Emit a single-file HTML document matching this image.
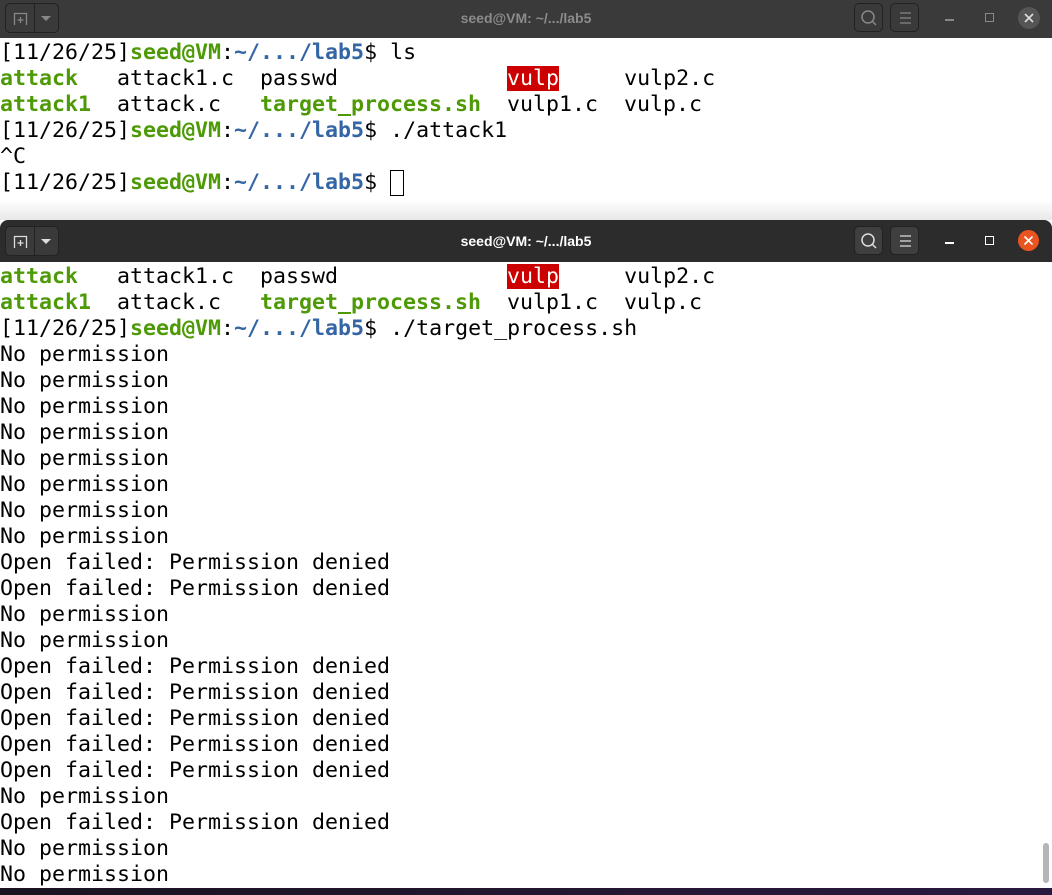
<!DOCTYPE html>
<html><head><meta charset="utf-8"><style>
*{margin:0;padding:0;box-sizing:border-box}
body{width:1052px;height:895px;overflow:hidden;background:#fff;position:relative;font-family:"DejaVu Sans Mono","Liberation Mono",monospace}
.tb{position:absolute;left:0;width:1052px;height:38px}
.t1{top:0;background:#3a3a3a;height:38px}
.t2{top:220px;background:#2c2c2c;height:42px;border-radius:8px 8px 0 0}
.title{position:absolute;left:0;right:0;text-align:center;font-family:"Liberation Sans",sans-serif;font-weight:bold;font-size:14px}
.grp{position:absolute;left:5px;width:54px;height:30px;border-radius:5px;border:1px solid #222}
.grp .d{position:absolute;left:28px;top:0;bottom:0;width:1px;background:#222}
.btn{position:absolute;width:29px;height:29px;border-radius:5px;border:1px solid #222}
.term{position:absolute;left:0;font-size:21.6px;line-height:26px;white-space:pre;color:#000}
.g{color:#4e9a06;font-weight:bold}.b{color:#3465a4;font-weight:bold}
.r{background:#cc0000;color:#fff}
</style></head><body>
<div class="tb t1">
 <div class="grp" style="top:3px;background:#3a3a3a"><div class="d"></div>
  <svg style="position:absolute;left:7px;top:7px" width="16" height="16"><path d="M1.5 14V2.5h12V14" stroke="#888" fill="none" stroke-width="1.3"/><path d="M7.5 6v6M4.5 9h6" stroke="#888" stroke-width="1.3"/></svg>
  <svg style="position:absolute;left:35px;top:12px" width="12" height="8"><path d="M0 0h10L5 5z" fill="#888"/></svg>
 </div>
 <div class="title" style="top:10px;color:#8b8b8b">seed@VM: ~/.../lab5</div>
 <div class="btn" style="left:854px;top:3px"><svg width="29" height="29"><circle cx="13" cy="13" r="6" stroke="#888" stroke-width="1.5" fill="none"/><path d="M17 17l4 4" stroke="#888" stroke-width="1.5"/></svg></div>
 <div class="btn" style="left:890px;top:3px"><svg width="29" height="29"><path d="M9 9h11M9 14h11M9 19h11" stroke="#888" stroke-width="1.3"/></svg></div>
 <div style="position:absolute;left:945px;top:19px;width:9px;height:1.5px;background:#888"></div>
 <div style="position:absolute;left:985px;top:13px;width:9px;height:9px;border:1.5px solid #888"></div>
 <div style="position:absolute;left:1018px;top:7px;width:22px;height:22px;border-radius:11px;background:#555"><svg width="22" height="22"><path d="M7 7l8 8M15 7l-8 8" stroke="#ddd" stroke-width="1.6"/></svg></div>
</div>
<div class="term" style="top:40px">[11/26/25]<span class="g">seed@VM</span>:<span class="b">~/.../lab5</span>$ ls
<span class="g">attack</span>   attack1.c  passwd             <span class="r">vulp</span>     vulp2.c
<span class="g">attack1</span>  attack.c   <span class="g">target_process.sh</span>  vulp1.c  vulp.c
[11/26/25]<span class="g">seed@VM</span>:<span class="b">~/.../lab5</span>$ ./attack1
^C
[11/26/25]<span class="g">seed@VM</span>:<span class="b">~/.../lab5</span>$ <span style="display:inline-block;width:14px;height:26px;border:1px solid #000;vertical-align:top"></span></div>
<div style="position:absolute;left:0;top:200px;width:1052px;height:20px;background:linear-gradient(#fff,#e8e8e8)"></div>
<div class="tb t2">
 <div class="grp" style="top:6px;background:#3a3a3a"><div class="d"></div>
  <svg style="position:absolute;left:7px;top:7px" width="16" height="16"><path d="M1.5 14V2.5h12V14" stroke="#ddd" fill="none" stroke-width="1.3"/><path d="M7.5 6v6M4.5 9h6" stroke="#ddd" stroke-width="1.3"/></svg>
  <svg style="position:absolute;left:35px;top:12px" width="12" height="8"><path d="M0 0h10L5 5z" fill="#ddd"/></svg>
 </div>
 <div class="title" style="top:13px;color:#fff">seed@VM: ~/.../lab5</div>
 <div class="btn" style="left:854px;top:6px;background:#3f3f3f"><svg width="29" height="29"><circle cx="13" cy="13" r="6" stroke="#ddd" stroke-width="1.5" fill="none"/><path d="M17 17l4 4" stroke="#ddd" stroke-width="1.5"/></svg></div>
 <div class="btn" style="left:890px;top:6px;background:#3f3f3f"><svg width="29" height="29"><path d="M9 9h11M9 14h11M9 19h11" stroke="#ddd" stroke-width="1.3"/></svg></div>
 <div style="position:absolute;left:945px;top:22px;width:9px;height:1.5px;background:#fff"></div>
 <div style="position:absolute;left:985px;top:16px;width:9px;height:9px;border:1.5px solid #fff"></div>
 <div style="position:absolute;left:1018px;top:10px;width:21px;height:21px;border-radius:11px;background:#e95420"><svg width="21" height="21"><path d="M6.5 6.5l8 8M14.5 6.5l-8 8" stroke="#fff" stroke-width="1.6"/></svg></div>
</div>
<div class="term" style="top:264px"><span class="g">attack</span>   attack1.c  passwd             <span class="r">vulp</span>     vulp2.c
<span class="g">attack1</span>  attack.c   <span class="g">target_process.sh</span>  vulp1.c  vulp.c
[11/26/25]<span class="g">seed@VM</span>:<span class="b">~/.../lab5</span>$ ./target_process.sh
No permission
No permission
No permission
No permission
No permission
No permission
No permission
No permission
Open failed: Permission denied
Open failed: Permission denied
No permission
No permission
Open failed: Permission denied
Open failed: Permission denied
Open failed: Permission denied
Open failed: Permission denied
Open failed: Permission denied
No permission
Open failed: Permission denied
No permission
No permission</div>
<div style="position:absolute;left:1043px;top:843px;width:6px;height:40px;border-radius:3px;background:#b5b5b5"></div>
<div style="position:absolute;left:0;top:888px;width:1052px;height:7px;background:linear-gradient(90deg,#1a1420,#2a1a40)"></div>
</body></html>
